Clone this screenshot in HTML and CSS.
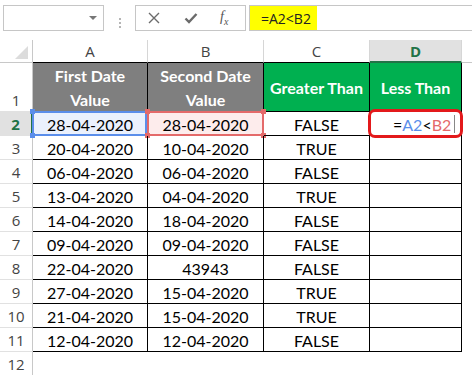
FILE: index.html
```html
<!DOCTYPE html>
<html lang="en">
<head>
    <meta charset="UTF-8">
    <meta name="viewport" content="width=device-width, initial-scale=1.0">
    <title>Less Than</title>
    <link rel="stylesheet" href="styles.css">
</head>
<body>
    <div class="formula-bar">
        <div class="name-box"><span class="drop"></span></div>
        <div class="grip"><i></i><i></i><i></i></div>
        <div class="fx-box">
            <svg class="icon-x" width="12" height="12" viewBox="0 0 12 12"><path d="M1 1 L11 11 M11 1 L1 11" stroke="#6b6b6b" stroke-width="1.4" fill="none"/></svg>
            <svg class="icon-check" width="14" height="12" viewBox="0 0 14 12"><path d="M1.5 6.5 L5 10 L12.5 2" stroke="#6b6b6b" stroke-width="2.4" fill="none"/></svg>
            <span class="fx">f<sub>x</sub></span>
        </div>
        <div class="formula-input"><span class="formula-text">=A2&lt;B2</span></div>
    </div>

    <div class="sheet">
        <div class="corner"><span class="tri"></span></div>
        <div class="ch tbl">A</div>
        <div class="ch tbl">B</div>
        <div class="ch tbl">C</div>
        <div class="ch sel">D</div>
        <div class="ch blank"></div>

        <div class="rn top">1</div>
        <div class="c head gray">First Date<br>Value</div>
        <div class="c head gray">Second Date<br>Value</div>
        <div class="c head green">Greater Than</div>
        <div class="c head green">Less Than</div>
        <div class="e"></div>

        <div class="rn cur">2</div>
        <div class="c ref-a">28-04-2020<span class="frame blue"><b class="tl"></b><b class="bl"></b></span></div>
        <div class="c ref-b">28-04-2020<span class="frame red"><b class="tl"></b><b class="bl"></b><b class="tr"></b><b class="br"></b></span></div>
        <div class="c">FALSE</div>
        <div class="c edit">=<span class="t-blue">A2</span>&lt;<span class="t-red">B2</span><span class="caret"></span><span class="mark"></span></div>
        <div class="e"></div>

        <div class="rn">3</div>
        <div class="c">20-04-2020</div>
        <div class="c">10-04-2020</div>
        <div class="c">TRUE</div>
        <div class="c"></div>
        <div class="e"></div>

        <div class="rn">4</div>
        <div class="c">06-04-2020</div>
        <div class="c">06-04-2020</div>
        <div class="c">FALSE</div>
        <div class="c"></div>
        <div class="e"></div>

        <div class="rn">5</div>
        <div class="c">13-04-2020</div>
        <div class="c">04-04-2020</div>
        <div class="c">TRUE</div>
        <div class="c"></div>
        <div class="e"></div>

        <div class="rn">6</div>
        <div class="c">14-04-2020</div>
        <div class="c">18-04-2020</div>
        <div class="c">FALSE</div>
        <div class="c"></div>
        <div class="e"></div>

        <div class="rn">7</div>
        <div class="c">09-04-2020</div>
        <div class="c">09-04-2020</div>
        <div class="c">FALSE</div>
        <div class="c"></div>
        <div class="e"></div>

        <div class="rn">8</div>
        <div class="c">22-04-2020</div>
        <div class="c">43943</div>
        <div class="c">FALSE</div>
        <div class="c"></div>
        <div class="e"></div>

        <div class="rn">9</div>
        <div class="c">27-04-2020</div>
        <div class="c">15-04-2020</div>
        <div class="c">TRUE</div>
        <div class="c"></div>
        <div class="e"></div>

        <div class="rn">10</div>
        <div class="c">21-04-2020</div>
        <div class="c">15-04-2020</div>
        <div class="c">TRUE</div>
        <div class="c"></div>
        <div class="e"></div>

        <div class="rn">11</div>
        <div class="c">12-04-2020</div>
        <div class="c">12-04-2020</div>
        <div class="c">FALSE</div>
        <div class="c"></div>
        <div class="e"></div>

        <div class="rn last">12</div>
        <div class="e"></div>
        <div class="e"></div>
        <div class="e"></div>
        <div class="e"></div>
        <div class="e"></div>
    </div>
</body>
</html>
```

FILE: styles.css
```css
body {
    margin: 0;
    width: 472px;
    height: 375px;
    overflow: hidden;
    background-color: #fff;
    color: #000;
    font-family: Lato, 'Open Sans', sans-serif;
}

/* formula bar */

.formula-bar {
    display: flex;
    height: 40px;
    padding: 5px 0 0 3px;
    box-sizing: border-box;
}

.name-box {
    width: 101px;
    height: 26px;
    border: 1px solid #c6c6c6;
    box-sizing: border-box;
    display: flex;
    align-items: center;
    justify-content: flex-end;
    padding-right: 6px;
}

.drop {
    border-left: 4px solid transparent;
    border-right: 4px solid transparent;
    border-top: 4px solid #777;
}

.grip {
    width: 31px;
    display: flex;
    flex-direction: column;
    align-items: center;
    justify-content: center;
    gap: 2px;
}

.grip i {
    width: 2px;
    height: 2px;
    background-color: #b5b5b5;
}

.fx-box {
    width: 111px;
    height: 26px;
    border: 1px solid #c6c6c6;
    box-sizing: border-box;
    display: flex;
    align-items: center;
}

.icon-x {
    margin-left: 12px;
}

.icon-check {
    margin-left: 24px;
}

.fx {
    margin-left: 22px;
    font-family: 'Liberation Serif', serif;
    font-style: italic;
    font-size: 14px;
    color: #555;
}

.fx sub {
    font-size: 10px;
}

.formula-input {
    flex: 1;
    margin-left: 3px;
    height: 26px;
    border: 1px solid #c6c6c6;
    border-right: none;
    box-sizing: border-box;
}

.formula-text {
    display: flex;
    align-items: center;
    width: 56px;
    height: 100%;
    padding-left: 11px;
    background-color: #ffff00;
    font-family: 'Open Sans', sans-serif;
    font-size: 14px;
    color: #222;
}

/* grid */

.sheet {
    display: grid;
    grid-template-columns: 33px 115px 116px 106px 92px 10px;
    grid-template-rows: 23px 49px repeat(10, 24px) 23px;
}

.corner {
    position: relative;
    border-right: 1px solid #c8c8c8;
    border-bottom: 1px solid #c8c8c8;
}

.tri {
    position: absolute;
    right: 4px;
    bottom: 3px;
    border-left: 13px solid transparent;
    border-bottom: 13px solid #dcdcdc;
}

.ch {
    display: flex;
    align-items: center;
    justify-content: center;
    border-right: 1px solid #d6d6d6;
    border-bottom: 1px solid #c8c8c8;
    font-family: 'Open Sans', sans-serif;
    font-size: 15px;
    color: #444;
}

.ch.tbl {
    border-bottom-color: #000;
}

.ch.sel {
    background-color: #e1e1e1;
    border-bottom: 2px solid #217346;
    color: #217346;
    font-weight: bold;
}

.ch.blank {
    border-right: none;
}

.rn {
    display: flex;
    align-items: center;
    justify-content: center;
    border-right: 1px solid #c8c8c8;
    border-bottom: 1px solid #e1e1e1;
    font-family: 'Open Sans', sans-serif;
    font-size: 15px;
    color: #444;
}

.rn.top {
    align-items: flex-end;
    padding-bottom: 1px;
}

.rn.cur {
    background-color: #e1e1e1;
    border-right: 2px solid #217346;
    color: #217346;
    font-weight: bold;
}

.rn.last {
    border-bottom: none;
}

.c {
    position: relative;
    display: flex;
    align-items: center;
    justify-content: center;
    border-right: 1px solid #000;
    border-bottom: 1px solid #000;
    font-size: 16px;
    padding-top: 1px;
}

.head {
    color: #fff;
    font-weight: bold;
    text-align: center;
    line-height: 24px;
}

.gray {
    background-color: #7f7f7f;
}

.green {
    background-color: #00b050;
}

/* range references while editing D2 */

.ref-a {
    background-color: #ebf1fd;
}

.ref-b {
    background-color: #fdecec;
}

.frame {
    position: absolute;
    top: -1px;
    left: -1px;
    right: -1px;
    bottom: -1px;
    border: 2px solid;
}

.frame.blue {
    border-color: #5b8eea;
    right: 0;
}

.frame.red {
    border-color: #e46a6a;
}

.frame b {
    position: absolute;
    width: 5px;
    height: 5px;
}

.blue b {
    background-color: #5b8eea;
}

.red b {
    background-color: #e46a6a;
}

.frame .tl { top: -4px; left: -4px; }
.frame .bl { bottom: -4px; left: -4px; }
.frame .tr { top: -4px; right: -4px; }
.frame .br { bottom: -4px; right: -4px; }

.edit {
    justify-content: flex-start;
    padding-left: 23px;
}

.t-blue {
    color: #5b8eea;
}

.t-red {
    color: #e46a6a;
}

.caret {
    width: 1px;
    height: 18px;
    margin-left: 3px;
    background-color: #888;
}

.mark {
    position: absolute;
    top: -3px;
    left: -2px;
    right: -2px;
    bottom: -3px;
    border: 3px solid #e3191b;
    border-radius: 7px;
}

.e {
    border: none;
}
```
